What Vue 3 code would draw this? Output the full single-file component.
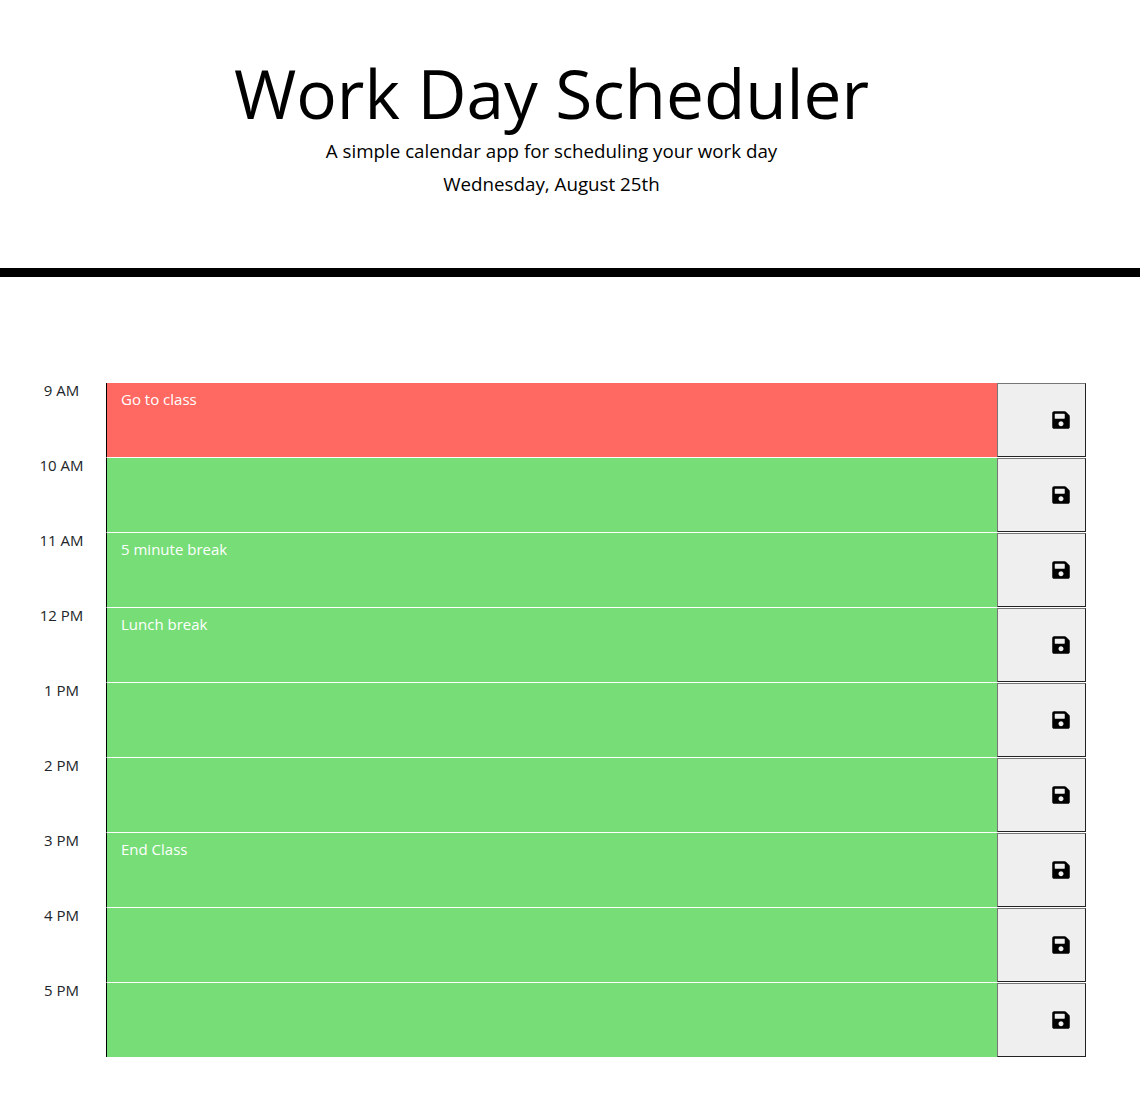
<script setup>
const hours = [
  { time: '9 AM', text: 'Go to class', state: 'present' },
  { time: '10 AM', text: '', state: 'future' },
  { time: '11 AM', text: '5 minute break', state: 'future' },
  { time: '12 PM', text: 'Lunch break', state: 'future' },
  { time: '1 PM', text: '', state: 'future' },
  { time: '2 PM', text: '', state: 'future' },
  { time: '3 PM', text: 'End Class', state: 'future' },
  { time: '4 PM', text: '', state: 'future' },
  { time: '5 PM', text: '', state: 'future' }
];
</script>

<template>
  <div class="page">
    <header class="jumbotron">
      <h1>Work Day Scheduler</h1>
      <p class="lead">A simple calendar app for scheduling your work day</p>
      <p class="lead">Wednesday, August 25th</p>
    </header>
    <main class="planner">
      <div v-for="hour in hours" :key="hour.time" class="row">
        <div class="hour">{{ hour.time }}</div>
        <textarea class="description" :class="hour.state" :value="hour.text"></textarea>
        <button class="save" type="button" aria-label="Save">
          <svg class="icon" viewBox="0 0 448 512" aria-hidden="true">
            <path fill="currentColor" d="M433.941 129.941l-83.882-83.882A48 48 0 0 0 316.118 32H48C21.49 32 0 53.49 0 80v352c0 26.51 21.49 48 48 48h352c26.51 0 48-21.49 48-48V163.882a48 48 0 0 0-14.059-33.941zM224 416c-35.346 0-64-28.654-64-64 0-35.346 28.654-64 64-64s64 28.654 64 64c0 35.346-28.654 64-64 64zm96-304.520V212c0 6.627-5.373 12-12 12H76c-6.627 0-12-5.373-12-12V108c0-6.627 5.373-12 12-12h228.520c3.183 0 6.235 1.264 8.485 3.515l3.480 3.480A11.996 11.996 0 0 1 320 111.480z" />
          </svg>
        </button>
      </div>
    </main>
  </div>
</template>

<style>
html,
body {
  margin: 0;
  background: #fff;
}
</style>

<style scoped>
.page {
  font-family: "Open Sans", sans-serif;
  color: #000;
  padding-bottom: 39px;
}

.jumbotron {
  box-sizing: border-box;
  height: 277px;
  padding: 52px 37px 0 0;
  text-align: center;
  border-bottom: 9px solid #000;
}

h1 {
  margin: 0;
  font-size: 67.5px;
  font-weight: 400;
  line-height: 82px;
}

.lead {
  margin: 0;
  font-size: 18.75px;
  font-weight: 400;
  line-height: 33px;
}

.planner {
  margin: 106px 54px 0 0;
}

.row {
  display: grid;
  grid-template-columns: 106px 1fr 89px;
  height: 75px;
}

.row:last-child {
  height: 74px;
}

.hour {
  box-sizing: border-box;
  padding: 0 0 0 17px;
  text-align: center;
  font-size: 15px;
  line-height: 14px;
  color: #212529;
}

.description {
  box-sizing: border-box;
  display: block;
  width: 100%;
  height: 100%;
  margin: 0;
  padding: 6px 14px;
  border: none;
  border-left: 1px solid #000;
  border-bottom: 1px solid #fff;
  border-radius: 0;
  outline: none;
  resize: none;
  font-family: inherit;
  font-size: 15px;
  line-height: 20px;
  color: #fff;
}

.row:last-child .description {
  border-bottom: none;
}

.present {
  background: #ff6961;
}

.future {
  background: #77dd77;
}

.save {
  box-sizing: border-box;
  display: flex;
  align-items: center;
  justify-content: flex-end;
  height: 74px;
  margin: 0;
  padding: 0 15px 1px 0;
  background: #efefef;
  border-style: solid;
  border-width: 1px;
  border-color: #767676 #222 #222 #767676;
  border-radius: 0;
  color: #000;
}

.icon {
  display: block;
  width: 18px;
  height: 20px;
}
</style>
